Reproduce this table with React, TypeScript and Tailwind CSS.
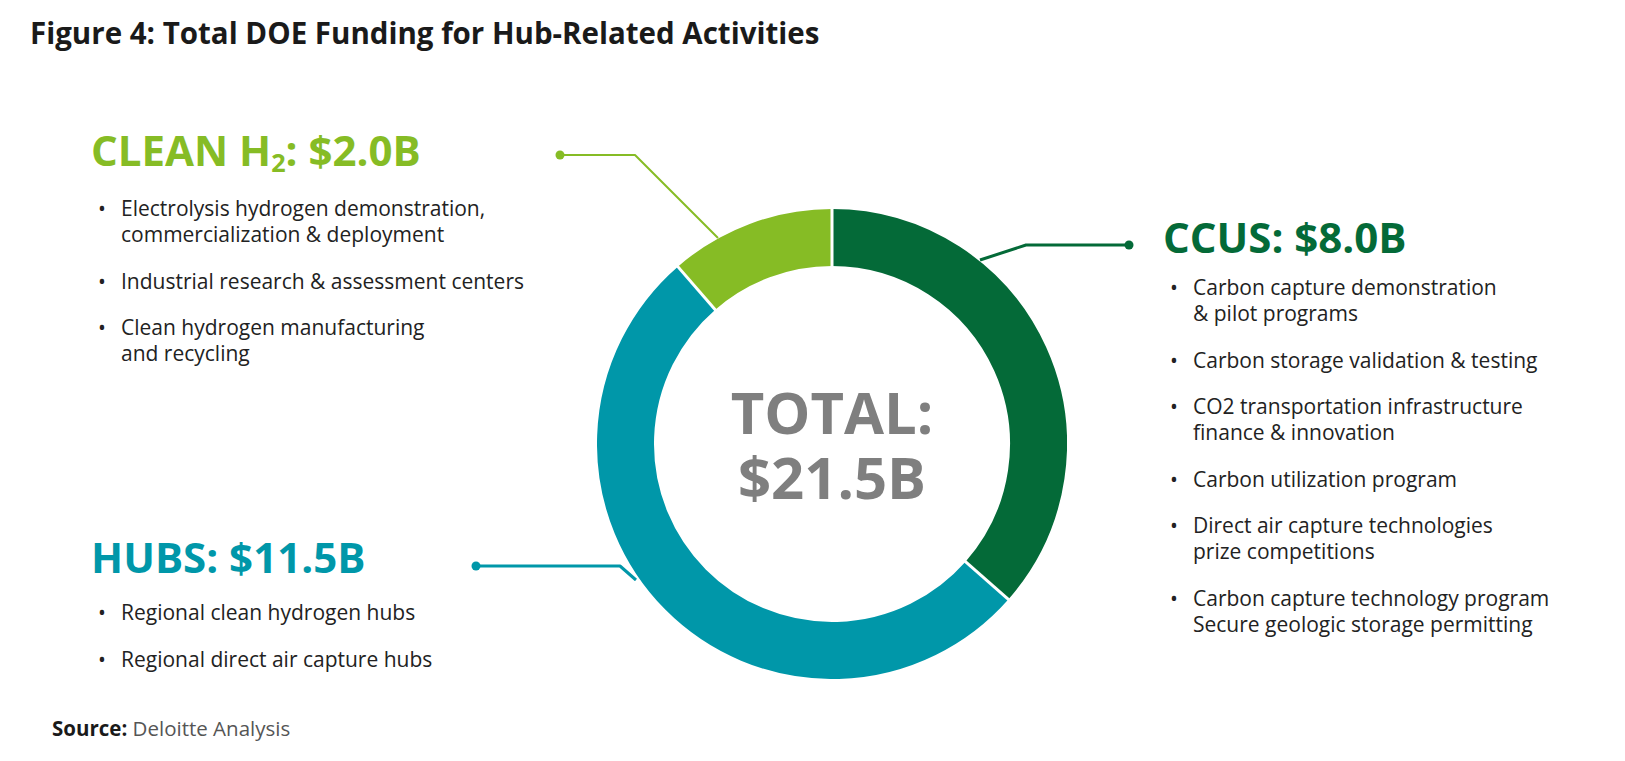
import React from 'react';

const CX = 235;
const CY = 235;
const R = 206.5;

function pt(deg: number, r: number) {
  const a = (deg * Math.PI) / 180;
  return [CX + r * Math.sin(a), CY - r * Math.cos(a)];
}

function arc(from: number, to: number) {
  const [x1, y1] = pt(from, R);
  const [x2, y2] = pt(to, R);
  const large = to - from > 180 ? 1 : 0;
  return `M${x1} ${y1} A${R} ${R} 0 ${large} 1 ${x2} ${y2}`;
}

function divider(deg: number) {
  const [x1, y1] = pt(deg, 176);
  const [x2, y2] = pt(deg, 237);
  return <line x1={x1} y1={y1} x2={x2} y2={y2} stroke="#ffffff" strokeWidth={3} />;
}

type Section = {
  title: React.ReactNode;
  color: string;
  items: string[][];
};

const clean: Section = {
  title: (
    <>
      CLEAN H<sub className="text-[0.6em] relative top-[0.22em] align-baseline">2</sub>: $2.0B
    </>
  ),
  color: 'text-[#86bc25]',
  items: [
    ['Electrolysis hydrogen demonstration,', 'commercialization & deployment'],
    ['Industrial research & assessment centers'],
    ['Clean hydrogen manufacturing', 'and recycling'],
  ],
};

const ccus: Section = {
  title: 'CCUS: $8.0B',
  color: 'text-[#046a38]',
  items: [
    ['Carbon capture demonstration', '& pilot programs'],
    ['Carbon storage validation & testing'],
    ['CO2 transportation infrastructure', 'finance & innovation'],
    ['Carbon utilization program'],
    ['Direct air capture technologies', 'prize competitions'],
    ['Carbon capture technology program', 'Secure geologic storage permitting'],
  ],
};

const hubs: Section = {
  title: 'HUBS: $11.5B',
  color: 'text-[#0097a9]',
  items: [['Regional clean hydrogen hubs'], ['Regional direct air capture hubs']],
};

function BulletList({ items }: { items: string[][] }) {
  return (
    <ul className="flex flex-col gap-[20.5px] text-[21px] leading-[26px] text-[#222222]">
      {items.map((lines, i) => (
        <li key={i} className="flex">
          <span className="w-[30px] pl-[7px] shrink-0">•</span>
          <span>
            {lines.map((l, j) => (
              <span key={j} className="block whitespace-nowrap">
                {l}
              </span>
            ))}
          </span>
        </li>
      ))}
    </ul>
  );
}

function Heading({ section }: { section: Section }) {
  return (
    <h2 className={`text-[42px] leading-[44px] font-bold whitespace-nowrap ${section.color}`}>
      {section.title}
    </h2>
  );
}

export default function App() {
  return (
    <div className="relative w-[1625px] h-[761px] overflow-hidden bg-white font-['Open_Sans',sans-serif]">
      <h1 className="pt-[16px] pl-[30px] text-[29.5px] leading-[34px] font-bold text-[#1a1a1a] whitespace-nowrap">
        Figure 4: Total DOE Funding for Hub-Related Activities
      </h1>

      <div className="flex">
        <div className="w-[597px] pl-[91px] pt-[78px] shrink-0">
          <Heading section={clean} />
          <div className="mt-[23px]">
            <BulletList items={clean.items} />
          </div>
          <div className="mt-[169px]">
            <Heading section={hubs} />
            <div className="mt-[20px]">
              <BulletList items={hubs.items} />
            </div>
          </div>
        </div>

        <div className="relative mt-[159px] w-[470px] h-[470px] shrink-0 flex items-center justify-center">
          <svg className="absolute inset-0" width="470" height="470" viewBox="0 0 470 470">
            <path d={arc(0, 131.4)} fill="none" stroke="#046a38" strokeWidth={57} />
            <path d={arc(131.4, 319)} fill="none" stroke="#0097a9" strokeWidth={57} />
            <path d={arc(319, 360)} fill="none" stroke="#86bc25" strokeWidth={57} />
            {divider(0)}
            {divider(131.4)}
            {divider(319)}
          </svg>
          <div className="relative text-center text-[58px] leading-[65px] font-bold text-[#7f7f7f]">
            TOTAL:
            <br />
            $21.5B
          </div>
        </div>

        <div className="pl-[96px] pt-[165px]">
          <Heading section={ccus} />
          <div className="mt-[15px]">
            <BulletList items={ccus.items} />
          </div>
        </div>
      </div>

      <p className="mt-[37px] pl-[52px] text-[20.5px] leading-[24px] text-[#555555]">
        <span className="font-bold text-[#1a1a1a]">Source:</span> Deloitte Analysis
      </p>

      {/* leader lines */}
      <svg className="absolute inset-0 pointer-events-none" width="1625" height="761" viewBox="0 0 1625 761">
        <g fill="none" strokeLinejoin="round">
          <path d="M560 155 H635 L718 238" stroke="#86bc25" strokeWidth={2} />
          <path d="M1129 245 H1026 L980 260" stroke="#046a38" strokeWidth={3} />
          <path d="M476 566 H620 L636 580" stroke="#0097a9" strokeWidth={3} />
        </g>
        <circle cx="560" cy="155" r="4.5" fill="#86bc25" />
        <circle cx="1129" cy="245" r="4.5" fill="#046a38" />
        <circle cx="476" cy="566" r="4.5" fill="#0097a9" />
      </svg>
    </div>
  );
}
